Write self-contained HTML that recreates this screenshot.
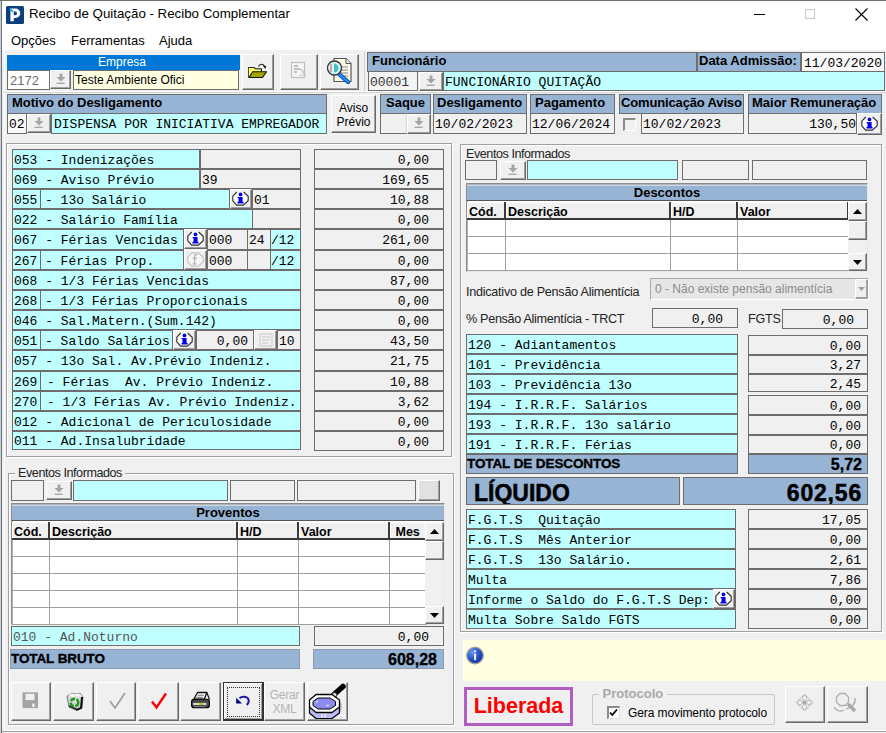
<!DOCTYPE html>
<html><head><meta charset="utf-8"><style>
html,body{margin:0;padding:0;width:886px;height:733px;overflow:hidden;background:#f0f0f0}
.a{position:absolute;box-sizing:border-box}
.t{position:absolute;white-space:pre;color:#000}
.ed{border:1px solid #6d6d6d;display:flex;align-items:center;white-space:pre;overflow:hidden}
.hd{background:#98b4d4;font-family:Liberation Sans,sans-serif;font-weight:bold;color:#000}
.bt{background:#f0f0f0;border-top:1px solid #fff;border-left:1px solid #fff;border-right:1px solid #696969;border-bottom:1px solid #696969;box-shadow:inset -1px -1px 0 #a0a0a0}
.gb{border:1px solid #a0a0a0;box-shadow:inset 1px 1px 0 #fff, 1px 1px 0 #fff}
</style></head><body>
<div class="a " style="left:0px;top:0px;width:886px;height:733px;background:#f0f0f0"></div>
<div class="a " style="left:0px;top:0px;width:886px;height:50px;background:#fff"></div>
<div class="a " style="left:0px;top:0px;width:1px;height:733px;background:#c3cfe2"></div>
<div class="a " style="left:1px;top:0px;width:1px;height:733px;background:#707070"></div>
<div class="a " style="left:0px;top:0px;width:886px;height:1px;background:#707070"></div>
<svg class="a" style="left:6px;top:6px" width="18" height="18" viewBox="0 0 18 18"><rect x="0" y="0" width="18" height="18" rx="1.5" fill="#0b3f7e"/><path fill-rule="evenodd" d="M4.4 2.6H9.6A4.7 4.7 0 0 1 9.6 12H7.8V15.2H4.4ZM7.8 5.6H9.2A1.8 1.8 0 0 1 9.2 9.2H7.8Z" fill="#fff"/><path d="M3.8 2.6L7.2 5.9" stroke="#1ea6e6" stroke-width="1.7"/></svg>
<div class="t " style="left:29px;top:6px;font:13.3px/16px Liberation Sans,sans-serif">Recibo de Quitação - Recibo Complementar</div>
<div class="a " style="left:754px;top:14px;width:11px;height:1px;background:#000"></div>
<div class="a " style="left:805px;top:9px;width:10px;height:10px;border:1px solid #c8c8c8;box-sizing:border-box"></div>
<svg class="a" style="left:855px;top:8px" width="13" height="13" viewBox="0 0 13 13"><path d="M0.5 0.5L12.5 12.5M12.5 0.5L0.5 12.5" stroke="#000" stroke-width="1.1"/></svg>
<div class="t " style="left:11px;top:33px;font:13px/16px Liberation Sans,sans-serif">Opções</div>
<div class="t " style="left:71px;top:33px;font:13px/16px Liberation Sans,sans-serif">Ferramentas</div>
<div class="t " style="left:159px;top:33px;font:13px/16px Liberation Sans,sans-serif">Ajuda</div>
<div class="a " style="left:4px;top:50px;width:1px;height:683px;background:#fff"></div>
<div class="a " style="left:7px;top:55px;width:233px;height:15px;background:#0078d7;color:#fff;font:12px/15px Liberation Sans,sans-serif;text-align:center;padding-right:3px">Empresa</div>
<div class="a ed" style="left:7px;top:70px;width:43px;height:20px;background:#fff;justify-content:flex-start;padding:0px 2px 0;color:#6d6d6d;font:12px/1 Liberation Sans,sans-serif;font-size:13px">2172</div>
<div class="a bt" style="left:50px;top:70px;width:21px;height:19px;display:flex;align-items:center;justify-content:center"><svg width="12" height="12" viewBox="0 0 12 12" style="margin-top:-2px"><path d="M4.6 0.5h2.8v3.6h3.2L6 8.6 1.4 4.1h3.2z" fill="#a4a4a4"/><rect x="1.6" y="9.6" width="8" height="1.4" fill="#a8a8a8"/></svg></div>
<div class="a ed" style="left:73px;top:70px;width:166px;height:20px;background:#ffffe1;justify-content:flex-start;padding:0px 1px 0;color:#000;font:12px/1 Liberation Sans,sans-serif;font-size:12px">Teste Ambiente Ofici</div>
<div class="a bt" style="left:242px;top:54px;width:32px;height:36px;"></div>
<div class="a bt" style="left:280px;top:54px;width:38px;height:36px;"></div>
<div class="a bt" style="left:320px;top:54px;width:39px;height:36px;"></div>
<div class="a " style="left:364px;top:52px;width:1px;height:39px;background:#d0d0d0"></div>
<div class="a ed hd" style="left:367px;top:52px;width:330px;height:20px;justify-content:flex-start;padding:0 4px 3px;font-size:13px;">Funcionário</div>
<div class="a ed hd" style="left:697px;top:52px;width:104px;height:20px;justify-content:flex-start;padding:0 1px 3px;font-size:13px;">Data Admissão:</div>
<div class="a ed" style="left:801px;top:52px;width:84px;height:20px;background:#f8f8f8;justify-content:flex-start;padding:2px 2px 0;color:#000;font:13px/1 Liberation Mono,monospace;">11/03/2020</div>
<div class="a ed" style="left:368px;top:71px;width:50px;height:20px;background:#f4f4f4;justify-content:flex-start;padding:2px 1px 0;color:#333;font:13px/1 Liberation Mono,monospace;">00001</div>
<div class="a bt" style="left:419px;top:72px;width:24px;height:19px;display:flex;align-items:center;justify-content:center"><svg width="12" height="12" viewBox="0 0 12 12" style="margin-top:-2px"><path d="M4.6 0.5h2.8v3.6h3.2L6 8.6 1.4 4.1h3.2z" fill="#a4a4a4"/><rect x="1.6" y="9.6" width="8" height="1.4" fill="#a8a8a8"/></svg></div>
<div class="a ed" style="left:443px;top:71px;width:442px;height:20px;background:#bfffff;justify-content:flex-start;padding:2px 1px 0;color:#000;font:13px/1 Liberation Mono,monospace;">FUNCIONÁRIO QUITAÇÃO</div>
<div class="a " style="left:4px;top:91px;width:882px;height:1px;background:#fff"></div>
<div class="a " style="left:4px;top:92px;width:882px;height:1px;background:#d4d4d4"></div>
<div class="a ed hd" style="left:7px;top:94px;width:320px;height:20px;justify-content:flex-start;padding:0 4px 3px;font-size:13px;">Motivo do Desligamento</div>
<div class="a ed" style="left:7px;top:113px;width:20px;height:21px;background:#f8f8f8;justify-content:flex-start;padding:2px 1px 0;color:#000;font:13px/1 Liberation Mono,monospace;">02</div>
<div class="a bt" style="left:27px;top:114px;width:24px;height:19px;display:flex;align-items:center;justify-content:center"><svg width="12" height="12" viewBox="0 0 12 12" style="margin-top:-2px"><path d="M4.6 0.5h2.8v3.6h3.2L6 8.6 1.4 4.1h3.2z" fill="#a4a4a4"/><rect x="1.6" y="9.6" width="8" height="1.4" fill="#a8a8a8"/></svg></div>
<div class="a ed" style="left:51px;top:113px;width:276px;height:21px;background:#bfffff;justify-content:flex-start;padding:2px 2px 0;color:#000;font:13px/1 Liberation Mono,monospace;">DISPENSA POR INICIATIVA EMPREGADOR</div>
<div class="a bt" style="left:331px;top:95px;width:45px;height:38px;"><div style="font:12px/14px Liberation Sans,sans-serif;text-align:center;width:100%;padding-top:5px">Aviso<br>Prévio</div></div>
<div class="a ed hd" style="left:380px;top:94px;width:51px;height:20px;justify-content:center;padding:0 0px 3px;font-size:13px;">Saque</div>
<div class="a ed" style="left:380px;top:113px;width:27px;height:21px;background:#f0f0f0;justify-content:flex-start;padding:2px 2px 0;color:#000;font:13px/1 Liberation Mono,monospace;border-right-color:#d8d8d8"></div>
<div class="a bt" style="left:407px;top:114px;width:24px;height:20px;display:flex;align-items:center;justify-content:center"><svg width="12" height="12" viewBox="0 0 12 12" style="margin-top:-2px"><path d="M4.6 0.5h2.8v3.6h3.2L6 8.6 1.4 4.1h3.2z" fill="#a4a4a4"/><rect x="1.6" y="9.6" width="8" height="1.4" fill="#a8a8a8"/></svg></div>
<div class="a ed hd" style="left:433px;top:94px;width:94px;height:20px;justify-content:flex-start;padding:0 3px 3px;font-size:13px;">Desligamento</div>
<div class="a ed" style="left:433px;top:113px;width:94px;height:21px;background:#f0f0f0;justify-content:flex-start;padding:2px 1px 0;color:#000;font:13px/1 Liberation Mono,monospace;">10/02/2023</div>
<div class="a ed hd" style="left:530px;top:94px;width:85px;height:20px;justify-content:flex-start;padding:0 4px 3px;font-size:13px;">Pagamento</div>
<div class="a ed" style="left:530px;top:113px;width:85px;height:21px;background:#f0f0f0;justify-content:flex-start;padding:2px 1px 0;color:#000;font:13px/1 Liberation Mono,monospace;">12/06/2024</div>
<div class="a ed hd" style="left:619px;top:94px;width:125px;height:20px;justify-content:flex-start;padding:0 1px 3px;font-size:13px;letter-spacing:-0.15px">Comunicação Aviso</div>
<div class="a " style="left:623px;top:118px;width:13px;height:13px;border-top:2px solid #8c8c8c;border-left:2px solid #8c8c8c;border-right:1px solid #fff;border-bottom:1px solid #fff;background:#f0f0f0"></div>
<div class="a ed" style="left:641px;top:113px;width:103px;height:21px;background:#f0f0f0;justify-content:flex-start;padding:2px 1px 0;color:#000;font:13px/1 Liberation Mono,monospace;">10/02/2023</div>
<div class="a ed hd" style="left:748px;top:94px;width:134px;height:20px;justify-content:flex-start;padding:0 3px 3px;font-size:13px;">Maior Remuneração</div>
<div class="a ed" style="left:748px;top:113px;width:109px;height:21px;background:#f0f0f0;justify-content:flex-end;padding:2px 0px 0;color:#000;font:13px/1 Liberation Mono,monospace;">130,50</div>
<div class="a bt" style="left:857px;top:113px;width:25px;height:22px;display:flex;align-items:center;justify-content:center"><svg width="17" height="15" viewBox="0 0 17 15" style="margin:-1px 0 0 -1px"><path d="M4.6 0.8H11.4L16.2 5.2V9.8L11.4 14.2H4.6L0.8 9.8V5.2z" fill="#fff"/><path d="M11.6 1L16.2 5.2V9.8L11.4 14.2H4.6L0.8 9.8V5.2L4.8 1" fill="none" stroke="#333" stroke-width="1.2"/><circle cx="8.5" cy="3.4" r="1.9" fill="#0000f0"/><path d="M5.6 6H10.6V10.6L11.7 11.5V12.6H5.3V11.5L6.5 10.6V7.3L5.6 7.1z" fill="#0000f0"/></svg></div>
<div class="a gb" style="left:6px;top:143px;width:446px;height:314px;"></div>
<div class="a ed" style="left:12px;top:149px;width:188px;height:20px;background:#bfffff;justify-content:flex-start;padding:2px 1px 0;color:#000;font:13px/1 Liberation Mono,monospace;">053 - Indenizações</div>
<div class="a ed" style="left:200px;top:149px;width:101px;height:20px;background:#f0f0f0;justify-content:flex-start;padding:2px 1px 0;color:#000;font:13px/1 Liberation Mono,monospace;"></div>
<div class="a ed" style="left:314px;top:149px;width:130px;height:20px;background:#f0f0f0;justify-content:flex-end;padding:2px 14px 0;color:#000;font:13px/1 Liberation Mono,monospace;">0,00</div>
<div class="a ed" style="left:12px;top:169px;width:188px;height:20px;background:#bfffff;justify-content:flex-start;padding:2px 1px 0;color:#000;font:13px/1 Liberation Mono,monospace;">069 - Aviso Prévio</div>
<div class="a ed" style="left:200px;top:169px;width:101px;height:20px;background:#f0f0f0;justify-content:flex-start;padding:2px 1px 0;color:#000;font:13px/1 Liberation Mono,monospace;">39</div>
<div class="a ed" style="left:314px;top:169px;width:130px;height:20px;background:#f0f0f0;justify-content:flex-end;padding:2px 14px 0;color:#000;font:13px/1 Liberation Mono,monospace;">169,65</div>
<div class="a ed" style="left:12px;top:189px;width:29px;height:20px;background:#bfffff;justify-content:flex-start;padding:2px 1px 0;color:#000;font:13px/1 Liberation Mono,monospace;">055</div>
<div class="a ed" style="left:40px;top:189px;width:190px;height:20px;background:#bfffff;justify-content:flex-start;padding:2px 4px 0;color:#000;font:13px/1 Liberation Mono,monospace;">- 13o Salário</div>
<div class="a bt" style="left:230px;top:189px;width:22px;height:20px;display:flex;align-items:center;justify-content:center"><svg width="17" height="15" viewBox="0 0 17 15" style="margin:-1px 0 0 -1px"><path d="M4.6 0.8H11.4L16.2 5.2V9.8L11.4 14.2H4.6L0.8 9.8V5.2z" fill="#fff"/><path d="M11.6 1L16.2 5.2V9.8L11.4 14.2H4.6L0.8 9.8V5.2L4.8 1" fill="none" stroke="#333" stroke-width="1.2"/><circle cx="8.5" cy="3.4" r="1.9" fill="#0000f0"/><path d="M5.6 6H10.6V10.6L11.7 11.5V12.6H5.3V11.5L6.5 10.6V7.3L5.6 7.1z" fill="#0000f0"/></svg></div>
<div class="a ed" style="left:252px;top:189px;width:49px;height:20px;background:#f0f0f0;justify-content:flex-start;padding:2px 1px 0;color:#000;font:13px/1 Liberation Mono,monospace;">01</div>
<div class="a ed" style="left:314px;top:189px;width:130px;height:20px;background:#f0f0f0;justify-content:flex-end;padding:2px 14px 0;color:#000;font:13px/1 Liberation Mono,monospace;">10,88</div>
<div class="a ed" style="left:12px;top:209px;width:241px;height:20px;background:#bfffff;justify-content:flex-start;padding:2px 1px 0;color:#000;font:13px/1 Liberation Mono,monospace;">022 - Salário Família</div>
<div class="a ed" style="left:252px;top:209px;width:49px;height:20px;background:#f0f0f0;justify-content:flex-start;padding:2px 1px 0;color:#000;font:13px/1 Liberation Mono,monospace;"></div>
<div class="a ed" style="left:314px;top:209px;width:130px;height:20px;background:#f0f0f0;justify-content:flex-end;padding:2px 14px 0;color:#000;font:13px/1 Liberation Mono,monospace;">0,00</div>
<div class="a ed" style="left:12px;top:229px;width:172px;height:21px;background:#bfffff;justify-content:flex-start;padding:2px 1px 0;color:#000;font:13px/1 Liberation Mono,monospace;">067 - Férias Vencidas</div>
<div class="a bt" style="left:184px;top:229px;width:23px;height:20px;display:flex;align-items:center;justify-content:center"><svg width="17" height="15" viewBox="0 0 17 15" style="margin:-1px 0 0 -1px"><path d="M4.6 0.8H11.4L16.2 5.2V9.8L11.4 14.2H4.6L0.8 9.8V5.2z" fill="#fff"/><path d="M11.6 1L16.2 5.2V9.8L11.4 14.2H4.6L0.8 9.8V5.2L4.8 1" fill="none" stroke="#333" stroke-width="1.2"/><circle cx="8.5" cy="3.4" r="1.9" fill="#0000f0"/><path d="M5.6 6H10.6V10.6L11.7 11.5V12.6H5.3V11.5L6.5 10.6V7.3L5.6 7.1z" fill="#0000f0"/></svg></div>
<div class="a ed" style="left:207px;top:229px;width:41px;height:21px;background:#f0f0f0;justify-content:flex-start;padding:2px 1px 0;color:#000;font:13px/1 Liberation Mono,monospace;">000</div>
<div class="a ed" style="left:247px;top:229px;width:24px;height:21px;background:#f0f0f0;justify-content:flex-start;padding:2px 1px 0;color:#000;font:13px/1 Liberation Mono,monospace;">24</div>
<div class="a ed" style="left:270px;top:229px;width:31px;height:21px;background:#bfffff;justify-content:flex-start;padding:2px 0px 0;color:#000;font:13px/1 Liberation Mono,monospace;">/12</div>
<div class="a ed" style="left:314px;top:229px;width:130px;height:21px;background:#f0f0f0;justify-content:flex-end;padding:2px 14px 0;color:#000;font:13px/1 Liberation Mono,monospace;">261,00</div>
<div class="a ed" style="left:12px;top:250px;width:29px;height:20px;background:#bfffff;justify-content:flex-start;padding:2px 1px 0;color:#000;font:13px/1 Liberation Mono,monospace;">267</div>
<div class="a ed" style="left:40px;top:250px;width:144px;height:20px;background:#bfffff;justify-content:flex-start;padding:2px 4px 0;color:#000;font:13px/1 Liberation Mono,monospace;">- Férias Prop.</div>
<div class="a bt" style="left:184px;top:250px;width:23px;height:20px;display:flex;align-items:center;justify-content:center"><svg width="17" height="15" viewBox="0 0 17 15" style="margin:-1px 0 0 -1px"><path d="M4.6 0.8H11.4L16.2 5.2V9.8L11.4 14.2H4.6L0.8 9.8V5.2z" fill="#f6f6f6" stroke="#c4c4c4" stroke-width="1.2"/><path d="M10.5 3C9.5 2.2 7.6 2.4 7.6 4.4V12M5.6 6.2H10" fill="none" stroke="#b8b8b8" stroke-width="1.5"/><path d="M5.5 12H9.8" stroke="#b8b8b8" stroke-width="1.2"/></svg></div>
<div class="a ed" style="left:207px;top:250px;width:41px;height:20px;background:#f0f0f0;justify-content:flex-start;padding:2px 1px 0;color:#000;font:13px/1 Liberation Mono,monospace;">000</div>
<div class="a ed" style="left:247px;top:250px;width:24px;height:20px;background:#f0f0f0;justify-content:flex-start;padding:2px 1px 0;color:#000;font:13px/1 Liberation Mono,monospace;"></div>
<div class="a ed" style="left:270px;top:250px;width:31px;height:20px;background:#bfffff;justify-content:flex-start;padding:2px 0px 0;color:#000;font:13px/1 Liberation Mono,monospace;">/12</div>
<div class="a ed" style="left:314px;top:250px;width:130px;height:20px;background:#f0f0f0;justify-content:flex-end;padding:2px 14px 0;color:#000;font:13px/1 Liberation Mono,monospace;">0,00</div>
<div class="a ed" style="left:12px;top:270px;width:289px;height:20px;background:#bfffff;justify-content:flex-start;padding:2px 1px 0;color:#000;font:13px/1 Liberation Mono,monospace;">068 - 1/3 Férias Vencidas</div>
<div class="a ed" style="left:314px;top:270px;width:130px;height:20px;background:#f0f0f0;justify-content:flex-end;padding:2px 14px 0;color:#000;font:13px/1 Liberation Mono,monospace;">87,00</div>
<div class="a ed" style="left:12px;top:290px;width:29px;height:20px;background:#bfffff;justify-content:flex-start;padding:2px 1px 0;color:#000;font:13px/1 Liberation Mono,monospace;">268</div>
<div class="a ed" style="left:40px;top:290px;width:261px;height:20px;background:#bfffff;justify-content:flex-start;padding:2px 4px 0;color:#000;font:13px/1 Liberation Mono,monospace;">- 1/3 Férias Proporcionais</div>
<div class="a ed" style="left:314px;top:290px;width:130px;height:20px;background:#f0f0f0;justify-content:flex-end;padding:2px 14px 0;color:#000;font:13px/1 Liberation Mono,monospace;">0,00</div>
<div class="a ed" style="left:12px;top:310px;width:289px;height:20px;background:#bfffff;justify-content:flex-start;padding:2px 1px 0;color:#000;font:13px/1 Liberation Mono,monospace;">046 - Sal.Matern.(Sum.142)</div>
<div class="a ed" style="left:314px;top:310px;width:130px;height:20px;background:#f0f0f0;justify-content:flex-end;padding:2px 14px 0;color:#000;font:13px/1 Liberation Mono,monospace;">0,00</div>
<div class="a ed" style="left:12px;top:330px;width:29px;height:20px;background:#bfffff;justify-content:flex-start;padding:2px 1px 0;color:#000;font:13px/1 Liberation Mono,monospace;">051</div>
<div class="a ed" style="left:40px;top:330px;width:133px;height:20px;background:#bfffff;justify-content:flex-start;padding:2px 4px 0;color:#000;font:13px/1 Liberation Mono,monospace;">- Saldo Salários</div>
<div class="a bt" style="left:173px;top:330px;width:23px;height:20px;display:flex;align-items:center;justify-content:center"><svg width="17" height="15" viewBox="0 0 17 15" style="margin:-1px 0 0 -1px"><path d="M4.6 0.8H11.4L16.2 5.2V9.8L11.4 14.2H4.6L0.8 9.8V5.2z" fill="#fff"/><path d="M11.6 1L16.2 5.2V9.8L11.4 14.2H4.6L0.8 9.8V5.2L4.8 1" fill="none" stroke="#333" stroke-width="1.2"/><circle cx="8.5" cy="3.4" r="1.9" fill="#0000f0"/><path d="M5.6 6H10.6V10.6L11.7 11.5V12.6H5.3V11.5L6.5 10.6V7.3L5.6 7.1z" fill="#0000f0"/></svg></div>
<div class="a ed" style="left:196px;top:330px;width:58px;height:20px;background:#f0f0f0;justify-content:flex-end;padding:2px 5px 0;color:#000;font:13px/1 Liberation Mono,monospace;">0,00</div>
<div class="a bt" style="left:254px;top:330px;width:23px;height:20px;display:flex;align-items:center;justify-content:center"><svg width="16" height="16" viewBox="0 0 16 16"><rect x="2" y="2" width="12" height="12" fill="none" stroke="#c8c8c8"/><path d="M4 5h8M4 8h8M4 11h6" stroke="#c8c8c8"/></svg></div>
<div class="a ed" style="left:277px;top:330px;width:24px;height:20px;background:#f0f0f0;justify-content:flex-start;padding:2px 1px 0;color:#000;font:13px/1 Liberation Mono,monospace;">10</div>
<div class="a ed" style="left:314px;top:330px;width:130px;height:20px;background:#f0f0f0;justify-content:flex-end;padding:2px 14px 0;color:#000;font:13px/1 Liberation Mono,monospace;">43,50</div>
<div class="a ed" style="left:12px;top:350px;width:289px;height:21px;background:#bfffff;justify-content:flex-start;padding:2px 1px 0;color:#000;font:13px/1 Liberation Mono,monospace;">057 - 13o Sal. Av.Prévio Indeniz.</div>
<div class="a ed" style="left:314px;top:350px;width:130px;height:21px;background:#f0f0f0;justify-content:flex-end;padding:2px 14px 0;color:#000;font:13px/1 Liberation Mono,monospace;">21,75</div>
<div class="a ed" style="left:12px;top:371px;width:29px;height:20px;background:#bfffff;justify-content:flex-start;padding:2px 1px 0;color:#000;font:13px/1 Liberation Mono,monospace;">269</div>
<div class="a ed" style="left:40px;top:371px;width:261px;height:20px;background:#bfffff;justify-content:flex-start;padding:2px 6px 0;color:#000;font:13px/1 Liberation Mono,monospace;">- Férias&nbsp; Av. Prévio Indeniz.</div>
<div class="a ed" style="left:314px;top:371px;width:130px;height:20px;background:#f0f0f0;justify-content:flex-end;padding:2px 14px 0;color:#000;font:13px/1 Liberation Mono,monospace;">10,88</div>
<div class="a ed" style="left:12px;top:391px;width:29px;height:20px;background:#bfffff;justify-content:flex-start;padding:2px 1px 0;color:#000;font:13px/1 Liberation Mono,monospace;">270</div>
<div class="a ed" style="left:40px;top:391px;width:261px;height:20px;background:#bfffff;justify-content:flex-start;padding:2px 6px 0;color:#000;font:13px/1 Liberation Mono,monospace;">- 1/3 Férias Av. Prévio Indeniz.</div>
<div class="a ed" style="left:314px;top:391px;width:130px;height:20px;background:#f0f0f0;justify-content:flex-end;padding:2px 14px 0;color:#000;font:13px/1 Liberation Mono,monospace;">3,62</div>
<div class="a ed" style="left:12px;top:411px;width:289px;height:20px;background:#bfffff;justify-content:flex-start;padding:2px 1px 0;color:#000;font:13px/1 Liberation Mono,monospace;">012 - Adicional de Periculosidade</div>
<div class="a ed" style="left:314px;top:411px;width:130px;height:20px;background:#f0f0f0;justify-content:flex-end;padding:2px 14px 0;color:#000;font:13px/1 Liberation Mono,monospace;">0,00</div>
<div class="a ed" style="left:12px;top:431px;width:289px;height:19px;background:#bfffff;justify-content:flex-start;padding:2px 1px 0;color:#000;font:13px/1 Liberation Mono,monospace;">011 - Ad.Insalubridade</div>
<div class="a ed" style="left:314px;top:431px;width:130px;height:20px;background:#f0f0f0;justify-content:flex-end;padding:2px 14px 0;color:#000;font:13px/1 Liberation Mono,monospace;">0,00</div>
<div class="a gb" style="left:8px;top:473px;width:446px;height:252px;"></div>
<div class="t " style="left:15px;top:466px;font:12.6px/14px Liberation Sans,sans-serif;background:#f0f0f0;letter-spacing:-0.45px;color:#222">&nbsp;Eventos Informados </div>
<div class="a ed" style="left:11px;top:480px;width:33px;height:21px;background:#f0f0f0;justify-content:flex-start;padding:2px 2px 0;color:#000;font:13px/1 Liberation Mono,monospace;"></div>
<div class="a bt" style="left:46px;top:481px;width:26px;height:19px;display:flex;align-items:center;justify-content:center"><svg width="12" height="12" viewBox="0 0 12 12" style="margin-top:-2px"><path d="M4.6 0.5h2.8v3.6h3.2L6 8.6 1.4 4.1h3.2z" fill="#a4a4a4"/><rect x="1.6" y="9.6" width="8" height="1.4" fill="#a8a8a8"/></svg></div>
<div class="a ed" style="left:73px;top:480px;width:155px;height:21px;background:#bfffff;justify-content:flex-start;padding:2px 2px 0;color:#000;font:13px/1 Liberation Mono,monospace;"></div>
<div class="a ed" style="left:230px;top:480px;width:65px;height:21px;background:#f0f0f0;justify-content:flex-start;padding:2px 2px 0;color:#000;font:13px/1 Liberation Mono,monospace;"></div>
<div class="a ed" style="left:297px;top:480px;width:119px;height:21px;background:#f0f0f0;justify-content:flex-start;padding:2px 2px 0;color:#000;font:13px/1 Liberation Mono,monospace;"></div>
<div class="a bt" style="left:418px;top:480px;width:22px;height:21px;background:#e1e1e1"></div>
<div class="a " style="left:11px;top:503px;width:434px;height:122px;border-top:1px solid #8c8c8c;border-left:1px solid #8c8c8c;border-right:1px solid #e8e8e8;border-bottom:1px solid #e8e8e8;box-shadow:inset 1px 1px 0 #b4b4b4;background:#fff"></div>
<div class="a " style="left:12px;top:505px;width:432px;height:16px;background:#98b4d4;box-shadow:inset 0 1px 0 #c8d8ea;font:bold 13px/16px Liberation Sans,sans-serif;text-align:center;border-bottom:1px solid #555">Proventos</div>
<div class="a " style="left:12px;top:522px;width:38px;height:18px;background:#f0f0f0;box-shadow:inset 1px 1px 0 #fff;border-right:2px solid #3a3a3a;border-bottom:2px solid #3a3a3a;font:bold 12.5px/16px Liberation Sans,sans-serif;padding:2px 0 0 2px;color:#000;overflow:hidden;white-space:pre">Cód.</div>
<div class="a " style="left:50px;top:522px;width:188px;height:18px;background:#f0f0f0;box-shadow:inset 1px 1px 0 #fff;border-right:2px solid #3a3a3a;border-bottom:2px solid #3a3a3a;font:bold 12.5px/16px Liberation Sans,sans-serif;padding:2px 0 0 2px;color:#000;overflow:hidden;white-space:pre">Descrição</div>
<div class="a " style="left:238px;top:522px;width:61px;height:18px;background:#f0f0f0;box-shadow:inset 1px 1px 0 #fff;border-right:2px solid #3a3a3a;border-bottom:2px solid #3a3a3a;font:bold 12.5px/16px Liberation Sans,sans-serif;padding:2px 0 0 2px;color:#000;overflow:hidden;white-space:pre">H/D</div>
<div class="a " style="left:299px;top:522px;width:91px;height:18px;background:#f0f0f0;box-shadow:inset 1px 1px 0 #fff;border-right:2px solid #3a3a3a;border-bottom:2px solid #3a3a3a;font:bold 12.5px/16px Liberation Sans,sans-serif;padding:2px 0 0 2px;color:#000;overflow:hidden;white-space:pre">Valor</div>
<div class="a " style="left:390px;top:522px;width:37px;height:18px;background:#f0f0f0;box-shadow:inset 1px 1px 0 #fff;border-right:2px solid #3a3a3a;border-bottom:2px solid #3a3a3a;font:bold 12.5px/16px Liberation Sans,sans-serif;padding:2px 0 0 2px;color:#000;overflow:hidden;white-space:pre"> Mes</div>
<div class="a " style="left:12px;top:540px;width:38px;height:17px;border-right:1px solid #a0a0a0;border-bottom:1px solid #a0a0a0"></div>
<div class="a " style="left:50px;top:540px;width:188px;height:17px;border-right:1px solid #a0a0a0;border-bottom:1px solid #a0a0a0"></div>
<div class="a " style="left:238px;top:540px;width:61px;height:17px;border-right:1px solid #a0a0a0;border-bottom:1px solid #a0a0a0"></div>
<div class="a " style="left:299px;top:540px;width:91px;height:17px;border-right:1px solid #a0a0a0;border-bottom:1px solid #a0a0a0"></div>
<div class="a " style="left:390px;top:540px;width:37px;height:17px;border-right:1px solid #a0a0a0;border-bottom:1px solid #a0a0a0"></div>
<div class="a " style="left:12px;top:557px;width:38px;height:17px;border-right:1px solid #a0a0a0;border-bottom:1px solid #a0a0a0"></div>
<div class="a " style="left:50px;top:557px;width:188px;height:17px;border-right:1px solid #a0a0a0;border-bottom:1px solid #a0a0a0"></div>
<div class="a " style="left:238px;top:557px;width:61px;height:17px;border-right:1px solid #a0a0a0;border-bottom:1px solid #a0a0a0"></div>
<div class="a " style="left:299px;top:557px;width:91px;height:17px;border-right:1px solid #a0a0a0;border-bottom:1px solid #a0a0a0"></div>
<div class="a " style="left:390px;top:557px;width:37px;height:17px;border-right:1px solid #a0a0a0;border-bottom:1px solid #a0a0a0"></div>
<div class="a " style="left:12px;top:574px;width:38px;height:17px;border-right:1px solid #a0a0a0;border-bottom:1px solid #a0a0a0"></div>
<div class="a " style="left:50px;top:574px;width:188px;height:17px;border-right:1px solid #a0a0a0;border-bottom:1px solid #a0a0a0"></div>
<div class="a " style="left:238px;top:574px;width:61px;height:17px;border-right:1px solid #a0a0a0;border-bottom:1px solid #a0a0a0"></div>
<div class="a " style="left:299px;top:574px;width:91px;height:17px;border-right:1px solid #a0a0a0;border-bottom:1px solid #a0a0a0"></div>
<div class="a " style="left:390px;top:574px;width:37px;height:17px;border-right:1px solid #a0a0a0;border-bottom:1px solid #a0a0a0"></div>
<div class="a " style="left:12px;top:591px;width:38px;height:17px;border-right:1px solid #a0a0a0;border-bottom:1px solid #a0a0a0"></div>
<div class="a " style="left:50px;top:591px;width:188px;height:17px;border-right:1px solid #a0a0a0;border-bottom:1px solid #a0a0a0"></div>
<div class="a " style="left:238px;top:591px;width:61px;height:17px;border-right:1px solid #a0a0a0;border-bottom:1px solid #a0a0a0"></div>
<div class="a " style="left:299px;top:591px;width:91px;height:17px;border-right:1px solid #a0a0a0;border-bottom:1px solid #a0a0a0"></div>
<div class="a " style="left:390px;top:591px;width:37px;height:17px;border-right:1px solid #a0a0a0;border-bottom:1px solid #a0a0a0"></div>
<div class="a " style="left:12px;top:608px;width:38px;height:17px;border-right:1px solid #a0a0a0;border-bottom:1px solid #a0a0a0"></div>
<div class="a " style="left:50px;top:608px;width:188px;height:17px;border-right:1px solid #a0a0a0;border-bottom:1px solid #a0a0a0"></div>
<div class="a " style="left:238px;top:608px;width:61px;height:17px;border-right:1px solid #a0a0a0;border-bottom:1px solid #a0a0a0"></div>
<div class="a " style="left:299px;top:608px;width:91px;height:17px;border-right:1px solid #a0a0a0;border-bottom:1px solid #a0a0a0"></div>
<div class="a " style="left:390px;top:608px;width:37px;height:17px;border-right:1px solid #a0a0a0;border-bottom:1px solid #a0a0a0"></div>
<div class="a " style="left:425px;top:522px;width:19px;height:102px;background:#f0f0f0"></div>
<div class="a bt" style="left:425px;top:522px;width:19px;height:19px;display:flex;align-items:center;justify-content:center"><svg width="9" height="5" viewBox="0 0 9 5"><path d="M0 5L4.5 0L9 5z" fill="#000"/></svg></div>
<div class="a bt" style="left:425px;top:541px;width:19px;height:19px;"></div>
<div class="a bt" style="left:425px;top:606px;width:19px;height:18px;display:flex;align-items:center;justify-content:center"><svg width="9" height="5" viewBox="0 0 9 5"><path d="M0 0L4.5 5L9 0z" fill="#000"/></svg></div>
<div class="a ed" style="left:11px;top:626px;width:289px;height:20px;background:#bfffff;justify-content:flex-start;padding:2px 1px 0;color:#555;font:13px/1 Liberation Mono,monospace;">010 - Ad.Noturno</div>
<div class="a ed" style="left:314px;top:626px;width:130px;height:20px;background:#f0f0f0;justify-content:flex-end;padding:2px 14px 0;color:#000;font:13px/1 Liberation Mono,monospace;">0,00</div>
<div class="a ed hd" style="left:10px;top:649px;width:290px;height:20px;justify-content:flex-start;padding:0 0px 1px;font-size:13.5px;border-color:#8a9bb0;letter-spacing:-0.1px;-webkit-text-stroke:0.35px #000">TOTAL BRUTO</div>
<div class="a ed hd" style="left:313px;top:649px;width:131px;height:20px;justify-content:flex-end;padding:0 6px 0px;font-size:16px;border-color:#8a9bb0;padding-top:2px;-webkit-text-stroke:0.3px #000">608,28</div>
<div class="a bt" style="left:11px;top:682px;width:40px;height:39px;"></div>
<div class="a bt" style="left:53px;top:682px;width:41px;height:39px;"></div>
<div class="a bt" style="left:96px;top:682px;width:40px;height:39px;"></div>
<div class="a bt" style="left:138px;top:682px;width:41px;height:39px;"></div>
<div class="a bt" style="left:180px;top:682px;width:41px;height:39px;"></div>
<div class="a bt" style="left:264px;top:682px;width:41px;height:39px;"></div>
<div class="a bt" style="left:307px;top:682px;width:41px;height:39px;"></div>
<div class="a " style="left:223px;top:682px;width:41px;height:39px;border:1px solid #3a3030;border-right-width:2px;border-bottom-width:2px;box-shadow:inset 1px 1px 0 #fff, inset -1px -1px 0 #a0a0a0"></div>
<div class="a " style="left:227px;top:687px;width:33px;height:30px;border:1px dotted #303030"></div>
<div class="t " style="left:264px;top:688px;font:12px/14px Liberation Sans,sans-serif;color:#b4b4b4;width:41px;text-align:center;letter-spacing:-0.2px">Gerar</div>
<div class="t " style="left:264px;top:702px;font:12px/14px Liberation Sans,sans-serif;color:#b4b4b4;width:41px;text-align:center;letter-spacing:-0.2px">XML</div>
<div class="a gb" style="left:460px;top:144px;width:422px;height:488px;"></div>
<div class="t " style="left:466px;top:147px;font:12.6px/14px Liberation Sans,sans-serif;letter-spacing:-0.45px;color:#222">Eventos Informados</div>
<div class="a ed" style="left:465px;top:160px;width:32px;height:20px;background:#f0f0f0;justify-content:flex-start;padding:2px 2px 0;color:#000;font:13px/1 Liberation Mono,monospace;"></div>
<div class="a bt" style="left:500px;top:161px;width:26px;height:19px;display:flex;align-items:center;justify-content:center"><svg width="12" height="12" viewBox="0 0 12 12" style="margin-top:-2px"><path d="M4.6 0.5h2.8v3.6h3.2L6 8.6 1.4 4.1h3.2z" fill="#a4a4a4"/><rect x="1.6" y="9.6" width="8" height="1.4" fill="#a8a8a8"/></svg></div>
<div class="a ed" style="left:527px;top:160px;width:151px;height:20px;background:#bfffff;justify-content:flex-start;padding:2px 2px 0;color:#000;font:13px/1 Liberation Mono,monospace;"></div>
<div class="a ed" style="left:682px;top:160px;width:67px;height:20px;background:#f0f0f0;justify-content:flex-start;padding:2px 2px 0;color:#000;font:13px/1 Liberation Mono,monospace;"></div>
<div class="a ed" style="left:752px;top:160px;width:115px;height:20px;background:#f0f0f0;justify-content:flex-start;padding:2px 2px 0;color:#000;font:13px/1 Liberation Mono,monospace;"></div>
<div class="a " style="left:466px;top:183px;width:402px;height:89px;border-top:1px solid #8c8c8c;border-left:1px solid #8c8c8c;border-right:1px solid #e8e8e8;border-bottom:1px solid #e8e8e8;box-shadow:inset 1px 1px 0 #b4b4b4;background:#fff"></div>
<div class="a " style="left:467px;top:185px;width:400px;height:16px;background:#98b4d4;box-shadow:inset 0 1px 0 #c8d8ea;font:bold 13px/16px Liberation Sans,sans-serif;text-align:center;border-bottom:1px solid #555">Descontos</div>
<div class="a " style="left:467px;top:202px;width:39px;height:18px;background:#f0f0f0;box-shadow:inset 1px 1px 0 #fff;border-right:2px solid #3a3a3a;border-bottom:2px solid #3a3a3a;font:bold 12.5px/16px Liberation Sans,sans-serif;padding:2px 0 0 2px;color:#000;overflow:hidden;white-space:pre">Cód.</div>
<div class="a " style="left:506px;top:202px;width:165px;height:18px;background:#f0f0f0;box-shadow:inset 1px 1px 0 #fff;border-right:2px solid #3a3a3a;border-bottom:2px solid #3a3a3a;font:bold 12.5px/16px Liberation Sans,sans-serif;padding:2px 0 0 2px;color:#000;overflow:hidden;white-space:pre">Descrição</div>
<div class="a " style="left:671px;top:202px;width:67px;height:18px;background:#f0f0f0;box-shadow:inset 1px 1px 0 #fff;border-right:2px solid #3a3a3a;border-bottom:2px solid #3a3a3a;font:bold 12.5px/16px Liberation Sans,sans-serif;padding:2px 0 0 2px;color:#000;overflow:hidden;white-space:pre">H/D</div>
<div class="a " style="left:738px;top:202px;width:111px;height:18px;background:#f0f0f0;box-shadow:inset 1px 1px 0 #fff;border-right:2px solid #3a3a3a;border-bottom:2px solid #3a3a3a;font:bold 12.5px/16px Liberation Sans,sans-serif;padding:2px 0 0 2px;color:#000;overflow:hidden;white-space:pre">Valor</div>
<div class="a " style="left:467px;top:220px;width:39px;height:17px;border-right:1px solid #a0a0a0;border-bottom:1px solid #a0a0a0"></div>
<div class="a " style="left:506px;top:220px;width:165px;height:17px;border-right:1px solid #a0a0a0;border-bottom:1px solid #a0a0a0"></div>
<div class="a " style="left:671px;top:220px;width:67px;height:17px;border-right:1px solid #a0a0a0;border-bottom:1px solid #a0a0a0"></div>
<div class="a " style="left:738px;top:220px;width:111px;height:17px;border-right:1px solid #a0a0a0;border-bottom:1px solid #a0a0a0"></div>
<div class="a " style="left:467px;top:237px;width:39px;height:17px;border-right:1px solid #a0a0a0;border-bottom:1px solid #a0a0a0"></div>
<div class="a " style="left:506px;top:237px;width:165px;height:17px;border-right:1px solid #a0a0a0;border-bottom:1px solid #a0a0a0"></div>
<div class="a " style="left:671px;top:237px;width:67px;height:17px;border-right:1px solid #a0a0a0;border-bottom:1px solid #a0a0a0"></div>
<div class="a " style="left:738px;top:237px;width:111px;height:17px;border-right:1px solid #a0a0a0;border-bottom:1px solid #a0a0a0"></div>
<div class="a " style="left:467px;top:254px;width:39px;height:17px;border-right:1px solid #a0a0a0;border-bottom:1px solid #a0a0a0"></div>
<div class="a " style="left:506px;top:254px;width:165px;height:17px;border-right:1px solid #a0a0a0;border-bottom:1px solid #a0a0a0"></div>
<div class="a " style="left:671px;top:254px;width:67px;height:17px;border-right:1px solid #a0a0a0;border-bottom:1px solid #a0a0a0"></div>
<div class="a " style="left:738px;top:254px;width:111px;height:17px;border-right:1px solid #a0a0a0;border-bottom:1px solid #a0a0a0"></div>
<div class="a " style="left:848px;top:202px;width:19px;height:69px;background:#f0f0f0"></div>
<div class="a bt" style="left:848px;top:202px;width:19px;height:19px;display:flex;align-items:center;justify-content:center"><svg width="9" height="5" viewBox="0 0 9 5"><path d="M0 5L4.5 0L9 5z" fill="#000"/></svg></div>
<div class="a bt" style="left:848px;top:221px;width:19px;height:19px;"></div>
<div class="a bt" style="left:848px;top:253px;width:19px;height:18px;display:flex;align-items:center;justify-content:center"><svg width="9" height="5" viewBox="0 0 9 5"><path d="M0 0L4.5 5L9 0z" fill="#000"/></svg></div>
<div class="t " style="left:466px;top:285px;font:12.6px/14px Liberation Sans,sans-serif;letter-spacing:-0.25px;color:#222">Indicativo de Pensão Alimentícia</div>
<div class="a " style="left:650px;top:278px;width:219px;height:22px;border-top:1px solid #a8a8a8;border-left:1px solid #a8a8a8;border-right:1px solid #fff;border-bottom:1px solid #fff;background:#e6e6e6;font:12px/20px Liberation Sans,sans-serif;color:#8c8c8c;padding-left:4px;white-space:pre">0 - Não existe pensão alimentícia</div>
<div class="a bt" style="left:855px;top:279px;width:13px;height:20px;display:flex;align-items:center;justify-content:center;border-right:1px solid #a0a0a0;border-bottom:1px solid #a0a0a0"><svg width="7" height="4" viewBox="0 0 7 4"><path d="M0 0h7L3.5 4z" fill="#a0a0a0"/></svg></div>
<div class="t " style="left:466px;top:312px;font:12.6px/14px Liberation Sans,sans-serif;letter-spacing:-0.3px;color:#222">% Pensão Alimentícia - TRCT</div>
<div class="a ed" style="left:652px;top:308px;width:86px;height:20px;background:#f0f0f0;justify-content:flex-end;padding:2px 14px 0;color:#000;font:13px/1 Liberation Mono,monospace;">0,00</div>
<div class="t " style="left:748px;top:312px;font:12.6px/14px Liberation Sans,sans-serif;letter-spacing:-0.2px;color:#222">FGTS</div>
<div class="a ed" style="left:782px;top:309px;width:86px;height:20px;background:#f0f0f0;justify-content:flex-end;padding:2px 13px 0;color:#000;font:13px/1 Liberation Mono,monospace;">0,00</div>
<div class="a ed" style="left:466px;top:334px;width:272px;height:20px;background:#bfffff;justify-content:flex-start;padding:2px 1px 0;color:#000;font:13px/1 Liberation Mono,monospace;">120 - Adiantamentos</div>
<div class="a ed" style="left:748px;top:335px;width:120px;height:20px;background:#f0f0f0;justify-content:flex-end;padding:2px 6px 0;color:#000;font:13px/1 Liberation Mono,monospace;">0,00</div>
<div class="a ed" style="left:466px;top:354px;width:272px;height:20px;background:#bfffff;justify-content:flex-start;padding:2px 1px 0;color:#000;font:13px/1 Liberation Mono,monospace;">101 - Previdência</div>
<div class="a ed" style="left:748px;top:355px;width:120px;height:19px;background:#f0f0f0;justify-content:flex-end;padding:2px 6px 0;color:#000;font:13px/1 Liberation Mono,monospace;">3,27</div>
<div class="a ed" style="left:466px;top:374px;width:272px;height:20px;background:#bfffff;justify-content:flex-start;padding:2px 1px 0;color:#000;font:13px/1 Liberation Mono,monospace;">103 - Previdência 13o</div>
<div class="a ed" style="left:748px;top:374px;width:120px;height:18px;background:#f0f0f0;justify-content:flex-end;padding:2px 6px 0;color:#000;font:13px/1 Liberation Mono,monospace;">2,45</div>
<div class="a ed" style="left:466px;top:394px;width:272px;height:20px;background:#bfffff;justify-content:flex-start;padding:2px 1px 0;color:#000;font:13px/1 Liberation Mono,monospace;">194 - I.R.R.F. Salários</div>
<div class="a ed" style="left:748px;top:395px;width:120px;height:20px;background:#f0f0f0;justify-content:flex-end;padding:2px 6px 0;color:#000;font:13px/1 Liberation Mono,monospace;">0,00</div>
<div class="a ed" style="left:466px;top:414px;width:272px;height:20px;background:#bfffff;justify-content:flex-start;padding:2px 1px 0;color:#000;font:13px/1 Liberation Mono,monospace;">193 - I.R.R.F. 13o salário</div>
<div class="a ed" style="left:748px;top:415px;width:120px;height:20px;background:#f0f0f0;justify-content:flex-end;padding:2px 6px 0;color:#000;font:13px/1 Liberation Mono,monospace;">0,00</div>
<div class="a ed" style="left:466px;top:434px;width:272px;height:20px;background:#bfffff;justify-content:flex-start;padding:2px 1px 0;color:#000;font:13px/1 Liberation Mono,monospace;">191 - I.R.R.F. Férias</div>
<div class="a ed" style="left:748px;top:435px;width:120px;height:19px;background:#f0f0f0;justify-content:flex-end;padding:2px 6px 0;color:#000;font:13px/1 Liberation Mono,monospace;">0,00</div>
<div class="a ed hd" style="left:466px;top:454px;width:272px;height:20px;justify-content:flex-start;padding:0 0px 1px;font-size:13.5px;letter-spacing:-0.1px;-webkit-text-stroke:0.35px #000">TOTAL DE DESCONTOS</div>
<div class="a ed hd" style="left:748px;top:454px;width:120px;height:20px;justify-content:flex-end;padding:0 5px 0px;font-size:16px;padding-top:2px;-webkit-text-stroke:0.3px #000">5,72</div>
<div class="a ed hd" style="left:466px;top:477px;width:214px;height:28px;justify-content:flex-start;padding:0 7px 0px;font-size:23px;padding-top:5px;-webkit-text-stroke:0.5px #000">LÍQUIDO</div>
<div class="a ed hd" style="left:683px;top:477px;width:185px;height:28px;justify-content:flex-end;padding:0 5px 0px;font-size:23px;letter-spacing:0.8px;padding-top:4px;-webkit-text-stroke:0.5px #000">602,56</div>
<div class="a ed" style="left:466px;top:509px;width:270px;height:20px;background:#bfffff;justify-content:flex-start;padding:2px 1px 0;color:#000;font:13px/1 Liberation Mono,monospace;">F.G.T.S&nbsp; Quitação</div>
<div class="a ed" style="left:748px;top:509px;width:120px;height:20px;background:#f0f0f0;justify-content:flex-end;padding:2px 6px 0;color:#000;font:13px/1 Liberation Mono,monospace;">17,05</div>
<div class="a ed" style="left:466px;top:529px;width:270px;height:20px;background:#bfffff;justify-content:flex-start;padding:2px 1px 0;color:#000;font:13px/1 Liberation Mono,monospace;">F.G.T.S&nbsp; Mês Anterior</div>
<div class="a ed" style="left:748px;top:529px;width:120px;height:20px;background:#f0f0f0;justify-content:flex-end;padding:2px 6px 0;color:#000;font:13px/1 Liberation Mono,monospace;">0,00</div>
<div class="a ed" style="left:466px;top:549px;width:270px;height:20px;background:#bfffff;justify-content:flex-start;padding:2px 1px 0;color:#000;font:13px/1 Liberation Mono,monospace;">F.G.T.S&nbsp; 13o Salário.</div>
<div class="a ed" style="left:748px;top:549px;width:120px;height:20px;background:#f0f0f0;justify-content:flex-end;padding:2px 6px 0;color:#000;font:13px/1 Liberation Mono,monospace;">2,61</div>
<div class="a ed" style="left:466px;top:569px;width:270px;height:20px;background:#bfffff;justify-content:flex-start;padding:2px 1px 0;color:#000;font:13px/1 Liberation Mono,monospace;">Multa</div>
<div class="a ed" style="left:748px;top:569px;width:120px;height:20px;background:#f0f0f0;justify-content:flex-end;padding:2px 6px 0;color:#000;font:13px/1 Liberation Mono,monospace;">7,86</div>
<div class="a ed" style="left:466px;top:589px;width:270px;height:20px;background:#bfffff;justify-content:flex-start;padding:2px 1px 0;color:#000;font:13px/1 Liberation Mono,monospace;">Informe o Saldo do F.G.T.S Dep:</div>
<div class="a ed" style="left:748px;top:589px;width:120px;height:20px;background:#f0f0f0;justify-content:flex-end;padding:2px 6px 0;color:#000;font:13px/1 Liberation Mono,monospace;">0,00</div>
<div class="a ed" style="left:466px;top:609px;width:270px;height:20px;background:#bfffff;justify-content:flex-start;padding:2px 1px 0;color:#000;font:13px/1 Liberation Mono,monospace;">Multa Sobre Saldo FGTS</div>
<div class="a ed" style="left:748px;top:609px;width:120px;height:20px;background:#f0f0f0;justify-content:flex-end;padding:2px 6px 0;color:#000;font:13px/1 Liberation Mono,monospace;">0,00</div>
<div class="a bt" style="left:713px;top:589px;width:22px;height:20px;display:flex;align-items:center;justify-content:center"><svg width="17" height="15" viewBox="0 0 17 15" style="margin:-1px 0 0 -1px"><path d="M4.6 0.8H11.4L16.2 5.2V9.8L11.4 14.2H4.6L0.8 9.8V5.2z" fill="#fff"/><path d="M11.6 1L16.2 5.2V9.8L11.4 14.2H4.6L0.8 9.8V5.2L4.8 1" fill="none" stroke="#333" stroke-width="1.2"/><circle cx="8.5" cy="3.4" r="1.9" fill="#0000f0"/><path d="M5.6 6H10.6V10.6L11.7 11.5V12.6H5.3V11.5L6.5 10.6V7.3L5.6 7.1z" fill="#0000f0"/></svg></div>
<div class="a " style="left:463px;top:640px;width:423px;height:41px;background:#ffffe1"></div>
<svg class="a" style="left:466px;top:646px" width="19" height="19" viewBox="0 0 19 19"><defs><radialGradient id="ig" cx="35%" cy="30%" r="75%"><stop offset="0" stop-color="#6a9cf4"/><stop offset="0.55" stop-color="#2652c8"/><stop offset="1" stop-color="#0c2a9c"/></radialGradient></defs><circle cx="9" cy="9.5" r="8.3" fill="url(#ig)" stroke="#a0a0a0" stroke-width="1.4"/><rect x="8.1" y="7.6" width="2" height="6.6" fill="#f4f4ff"/><rect x="8.1" y="4.4" width="2" height="1.8" fill="#e8f0ff"/></svg>
<div class="a " style="left:464px;top:687px;width:109px;height:39px;border:3px solid #b15ec0;box-sizing:border-box;color:#f00;font:bold 21.5px/33px Liberation Sans,sans-serif;text-align:center">Liberada</div>
<div class="a " style="left:592px;top:694px;width:183px;height:31px;border:1px solid #c8c8c8;border-radius:2px;box-sizing:border-box"></div>
<div class="t " style="left:599px;top:686px;font:bold 13px/16px Liberation Sans,sans-serif;color:#a8a8a8;background:#f0f0f0">&nbsp;Protocolo&nbsp;</div>
<div class="a " style="left:607px;top:706px;width:13px;height:13px;border-top:2px solid #8a8a8a;border-left:2px solid #8a8a8a;border-right:1px solid #e0e0e0;border-bottom:1px solid #e0e0e0;background:#fff;box-sizing:border-box"></div>
<svg class="a" style="left:608px;top:707px" width="11" height="11" viewBox="0 0 11 11"><path d="M2 5.5l2.3 2.5L9 2.5" stroke="#000" stroke-width="1.8" fill="none"/></svg>
<div class="t " style="left:628px;top:706px;font:12px/15px Liberation Sans,sans-serif;letter-spacing:-0.1px">Gera movimento protocolo</div>
<div class="a bt" style="left:785px;top:686px;width:40px;height:37px;"></div>
<div class="a bt" style="left:827px;top:686px;width:41px;height:37px;"></div>
<svg class="a" style="left:248px;top:62px;overflow:visible" width="20" height="17" viewBox="0 0 20 17"><path d="M1 5.5h5l1.5 1.5h6v3" fill="#ffff80" stroke="#222" stroke-width="1"/><path d="M0.8 15.5V5.5h5.2l1.5 1.5h5.8v3.5" fill="none" stroke="#222" stroke-width="1.2"/><path d="M1 15.5V6h4.8l1.4 1.4h5.6v2.2H5.5z" fill="#ffff66"/><path d="M1 15.5l3.7-5.7h13.8l-4 5.7z" fill="#a4a400" stroke="#111" stroke-width="1.1" stroke-linejoin="round"/><path d="M10.5 4.5c1.2-2.8 4.5-3 6 0" fill="none" stroke="#222" stroke-width="1.1"/><path d="M15 3.6l3.2 0.4-1 3z" fill="#111"/></svg>
<svg class="a" style="left:290px;top:61px;overflow:visible" width="19" height="19" viewBox="0 0 19 19"><rect x="1.5" y="1.5" width="13" height="15" fill="#f4f4f4" stroke="#c0c0c0" stroke-width="1.2"/><path d="M4 5h4M4 8h6M4 11h3" stroke="#b0b0b0" stroke-width="1.4"/><path d="M9 8c2 0 4 2 5 4M10 14h6M12 10l3 3" stroke="#c0c0c0" stroke-width="1.2" fill="none"/></svg>
<svg class="a" style="left:325px;top:57px;overflow:visible" width="31" height="28" viewBox="0 0 31 28"><path d="M9 1.5h12l5 5v18H9z" fill="#fffbe8" stroke="#555" stroke-width="1.2"/><path d="M21 1.5v5h5" fill="#eee" stroke="#555" stroke-width="1"/><path d="M14 10h9M14 13h9M14 16h9M14 19h9" stroke="#aaa" stroke-width="1.4"/><path d="M14 17l9 8" stroke="#0a3a9a" stroke-width="4.2" stroke-linecap="round"/><path d="M14 17l9 8" stroke="#1e90ff" stroke-width="2.4" stroke-linecap="round"/><circle cx="9.5" cy="11" r="7" fill="#d8f4f8" stroke="#333" stroke-width="1.3"/><path d="M6 7v8" stroke="#d08080" stroke-width="1.4"/><path d="M9 6.5a4.5 4.5 0 0 1 0 9z" fill="#40c0c0"/></svg>
<svg class="a" style="left:22px;top:692px;overflow:visible" width="17" height="17" viewBox="0 0 17 17"><rect x="0.5" y="0.3" width="15.5" height="15.8" fill="#a4a4a4"/><rect x="3.5" y="1.8" width="9" height="6.3" fill="#f0f0f0"/><rect x="10.2" y="11.6" width="2.4" height="3.4" fill="#f4f4f4"/></svg>
<svg class="a" style="left:65px;top:691px;overflow:visible" width="19" height="20" viewBox="0 0 19 20"><path d="M2 5l9-2 7 3-1 11-6 2-7-3z" fill="#d8d8d8" stroke="#777" stroke-width="1"/><path d="M17 6l-1 11-5 2" fill="none" stroke="#111" stroke-width="2"/><path d="M4 15l7 3" stroke="#222" stroke-width="1.6"/><path d="M2 5l5-3 4 1 4-1 3 4" fill="#eee" stroke="#999" stroke-width="1"/><path d="M5 3l4 3M11 3l3 3" stroke="#fff" stroke-width="1.5"/><circle cx="9.5" cy="11.5" r="3.8" fill="none" stroke="#189a18" stroke-width="2.4" stroke-dasharray="5 1.5"/></svg>
<svg class="a" style="left:109px;top:692px;overflow:visible" width="17" height="17" viewBox="0 0 17 17"><path d="M1 9l5 7L16 1" fill="none" stroke="#a0a0a0" stroke-width="1.8"/></svg>
<svg class="a" style="left:151px;top:692px;overflow:visible" width="16" height="17" viewBox="0 0 16 17"><path d="M1 9.5l4.5 6L15 1.5" fill="none" stroke="#ff0000" stroke-width="2.4"/></svg>
<svg class="a" style="left:186px;top:686px;overflow:visible" width="30" height="28" viewBox="0 0 30 28"><path d="M11.5 6.5H20.8L18.3 13.2H7.8Z" fill="#fff" stroke="#111" stroke-width="1.3" stroke-linejoin="round"/><path d="M11.6 9.2H17.8M10.4 11.3H16.6" stroke="#666" stroke-width="1"/><rect x="5.6" y="13.2" width="17.8" height="8.6" rx="2.6" fill="#454545" stroke="#000" stroke-width="1.1"/><rect x="7" y="16.9" width="13.5" height="2.1" fill="#d4d4d4"/><rect x="13.2" y="16.9" width="3.8" height="2.1" fill="#c8c800"/><path d="M8 20.4H19.5" stroke="#8a8a8a" stroke-width="0.9"/><path d="M20.8 6.5L23.5 13.5" stroke="#111" stroke-width="1.2"/></svg>
<svg class="a" style="left:233px;top:693px;overflow:visible" width="18" height="14" viewBox="0 0 18 14"><path d="M6.5 5.2C9 3 14.5 3 15.6 6.8C16.2 9.2 15 10.8 13.8 12" fill="none" stroke="#1a1aa0" stroke-width="1.9"/><path d="M3.2 4.8V10.6H9z" fill="#00008c"/></svg>
<svg class="a" style="left:306px;top:682px;overflow:visible" width="44" height="40" viewBox="0 0 44 40"><path d="M34 19Q38.5 24 34 31z" fill="#c4c4c4"/><path d="M28 12.5L37 4.5" stroke="#000" stroke-width="5.5" stroke-linecap="round"/><circle cx="28.5" cy="13" r="2.4" fill="#e0e0e0" stroke="#222" stroke-width="0.8"/><path d="M3.5 25V31L10 36.5H26L33.5 31V25z" fill="#bcbcf8" stroke="#000" stroke-width="1.2" stroke-linejoin="round"/><path d="M16 30v6M19 30v6" stroke="#fff" stroke-width="1"/><path d="M10 12.5H26L33.5 18V25L26 30.5H10L3.5 25V18z" fill="#fff" stroke="#000" stroke-width="1.3" stroke-linejoin="round"/><path d="M12 16H24L29.5 19.5V23.5L24 27H12L7 23.5V19.5z" fill="#8c8cf0" stroke="#000" stroke-width="1"/><path d="M10 20.5l2-1.5M20 24l3-1" stroke="#e8e8ff" stroke-width="1.2"/></svg>
<svg class="a" style="left:795px;top:693px;overflow:visible" width="19" height="19" viewBox="0 0 19 19"><path d="M9.5 1l8.5 8.5-8.5 8.5L1 9.5z" fill="none" stroke="#c0c0c0" stroke-width="1"/><circle cx="9.5" cy="5" r="2.3" fill="#f4f4f4" stroke="#b8b8b8"/><circle cx="9.5" cy="14" r="2.3" fill="#f4f4f4" stroke="#b8b8b8"/><circle cx="5" cy="9.5" r="2.3" fill="#f4f4f4" stroke="#b8b8b8"/><circle cx="14" cy="9.5" r="2.3" fill="#f4f4f4" stroke="#b8b8b8"/><circle cx="9.5" cy="9.5" r="2" fill="#a8a8a8"/></svg>
<svg class="a" style="left:833px;top:692px;overflow:visible" width="26" height="24" viewBox="0 0 26 24"><path d="M7 1.5h5l3.5 3.5v5l-3.5 3.5H7L3.5 10V5z" fill="none" stroke="#b0b0b0" stroke-width="1.3"/><path d="M15 12l7 7" stroke="#a8a8a8" stroke-width="3.5"/><path d="M22 6c1 5-3 10-9 11M1 15c2 4 7 5 10 3" stroke="#a8a8a8" stroke-width="1.2" fill="none"/></svg>
<div class="a " style="left:4px;top:730px;width:882px;height:1px;background:#fff"></div>
<div class="a " style="left:2px;top:731px;width:884px;height:1px;background:#a0a0a0"></div>
</body></html>
